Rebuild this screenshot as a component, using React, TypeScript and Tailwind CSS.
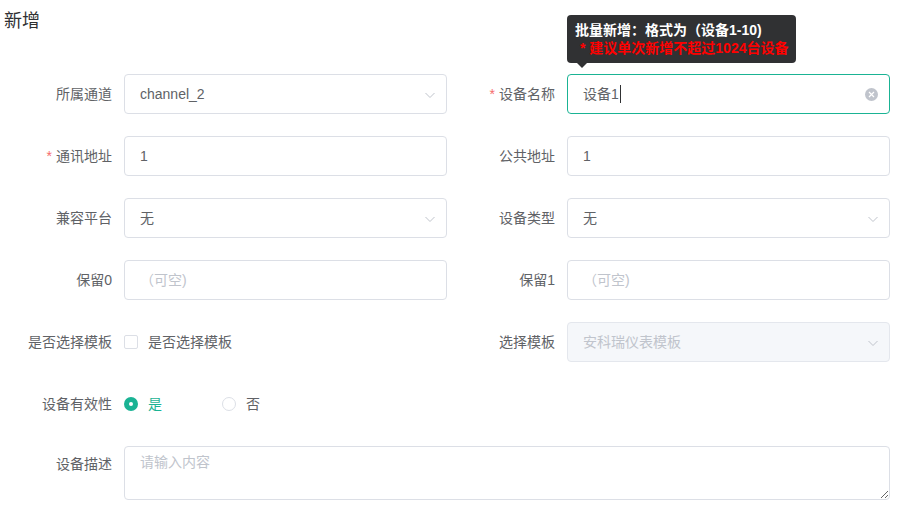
import React from "react";

const font = { fontFamily: '"Liberation Sans", "Noto Sans CJK SC", sans-serif' };

function Chevron() {
  return (
    <svg width="12" height="12" viewBox="0 0 12 12" className="absolute right-[10px] top-[14px]">
      <path d="M1.5 4 L6 8.5 L10.5 4" fill="none" stroke="#c0c4cc" strokeWidth="1" />
    </svg>
  );
}

function Label({ text, required }: { text: string; required?: boolean }) {
  return (
    <div className="w-[120px] shrink-0 pr-[12px] text-right text-[14px] leading-[40px] text-[#606266]">
      {required && <span className="mr-[4px] text-[#f56c6c]">*</span>}
      {text}
    </div>
  );
}

function Box({
  children,
  select,
  disabled,
  focused,
}: {
  children: React.ReactNode;
  select?: boolean;
  disabled?: boolean;
  focused?: boolean;
}) {
  return (
    <div
      className={
        "relative flex h-[40px] w-[323px] items-center rounded-[4px] border pl-[15px] text-[14px] " +
        (focused
          ? "border-[#1ab394] bg-white text-[#606266]"
          : disabled
          ? "border-[#e4e7ed] bg-[#f5f7fa] text-[#c0c4cc]"
          : "border-[#dcdfe6] bg-white text-[#606266]")
      }
    >
      {children}
      {select && <Chevron />}
    </div>
  );
}

function Field({ label, required, children }: { label: string; required?: boolean; children: React.ReactNode }) {
  return (
    <div className="flex h-[40px] w-[443px]">
      <Label text={label} required={required} />
      {children}
    </div>
  );
}

export default function App() {
  return (
    <div className="min-h-[505px] w-[904px] bg-white pl-[4px]" style={font}>
      <div className="pt-[9px] text-[18px] leading-[24px] text-[#303133]">新增</div>
      <div className="mt-[41px] flex w-[886px] flex-col gap-[22px]">
        <div className="flex">
          <Field label="所属通道">
            <Box select>channel_2</Box>
          </Field>
          <Field label="设备名称" required>
            <div className="relative">
              <Box focused>
                <span>设备1</span>
                <span className="ml-[1px] inline-block h-[18px] w-[1px] bg-[#303133]" />
                <span className="absolute right-[11px] top-[13px] flex h-[13px] w-[13px] items-center justify-center rounded-full bg-[#c0c4cc]">
                  <svg width="7" height="7" viewBox="0 0 7 7">
                    <path d="M1 1 L6 6 M6 1 L1 6" stroke="#fff" strokeWidth="1.2" />
                  </svg>
                </span>
              </Box>
              <div className="absolute bottom-[51px] left-0 z-10 whitespace-nowrap rounded-[4px] bg-[#303133] px-[8px] py-[6px] text-[14px] font-bold leading-[18px]">
                <div className="text-white">批量新增：格式为（设备1-10)</div>
                <div className="pl-[5px] text-[#ff0000]">* 建议单次新增不超过1024台设备</div>
                <div className="absolute -bottom-[5px] left-[10px] h-0 w-0 border-x-[5px] border-t-[5px] border-x-transparent border-t-[#303133]" />
              </div>
            </div>
          </Field>
        </div>
        <div className="flex">
          <Field label="通讯地址" required>
            <Box>1</Box>
          </Field>
          <Field label="公共地址">
            <Box>1</Box>
          </Field>
        </div>
        <div className="flex">
          <Field label="兼容平台">
            <Box select>无</Box>
          </Field>
          <Field label="设备类型">
            <Box select>无</Box>
          </Field>
        </div>
        <div className="flex">
          <Field label="保留0">
            <Box>
              <span className="text-[#c0c4cc]">（可空)</span>
            </Box>
          </Field>
          <Field label="保留1">
            <Box>
              <span className="text-[#c0c4cc]">（可空)</span>
            </Box>
          </Field>
        </div>
        <div className="flex">
          <Field label="是否选择模板">
            <div className="flex items-center">
              <span className="h-[14px] w-[14px] rounded-[2px] border border-[#dcdfe6] bg-white" />
              <span className="pl-[10px] text-[14px] text-[#606266]">是否选择模板</span>
            </div>
          </Field>
          <Field label="选择模板">
            <Box select disabled>
              安科瑞仪表模板
            </Box>
          </Field>
        </div>
        <div className="flex">
          <Field label="设备有效性">
            <div className="flex items-center">
              <span className="flex h-[14px] w-[14px] items-center justify-center rounded-full bg-[#1ab394]">
                <span className="h-[4px] w-[4px] rounded-full bg-white" />
              </span>
              <span className="pl-[10px] text-[14px] text-[#1ab394]">是</span>
              <span className="ml-[60px] h-[14px] w-[14px] rounded-full border border-[#dcdfe6] bg-white" />
              <span className="pl-[10px] text-[14px] text-[#606266]">否</span>
            </div>
          </Field>
        </div>
        <div className="flex">
          <div className="w-[120px] shrink-0 pr-[12px] text-right text-[14px] leading-[36px] text-[#606266]">设备描述</div>
          <textarea
            readOnly
            placeholder="请输入内容"
            className="h-[54px] w-[766px] rounded-[4px] border border-[#dcdfe6] px-[15px] py-[5px] text-[14px] leading-[21px] text-[#606266] outline-none placeholder:text-[#c0c4cc]"
            style={font}
          />
        </div>
      </div>
    </div>
  );
}
